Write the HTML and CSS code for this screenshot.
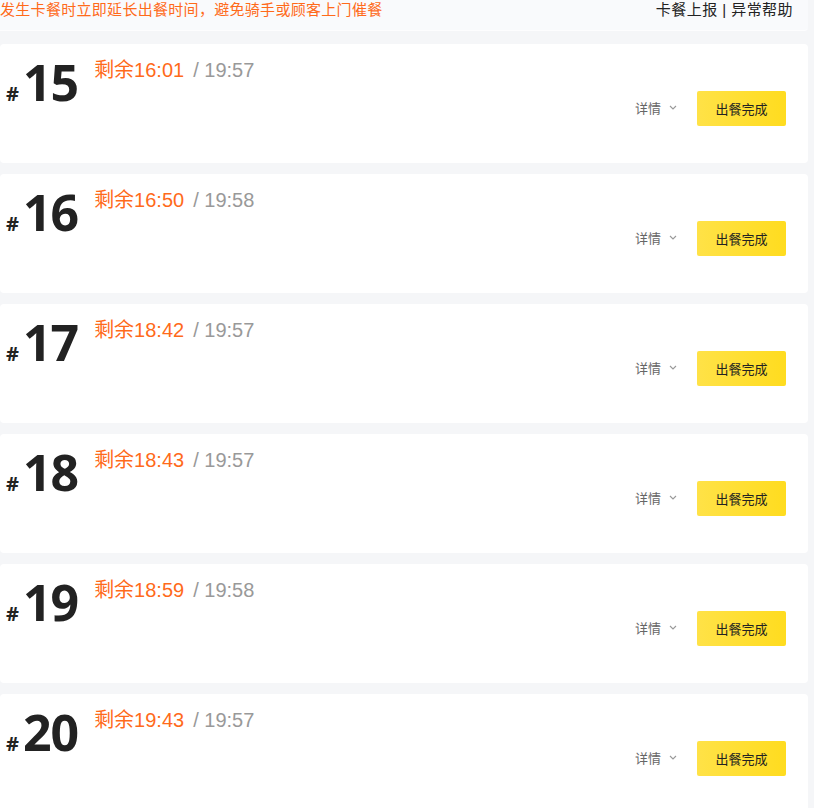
FILE: index.html
```html
<!DOCTYPE html>
<html lang="zh-CN">
<head>
<meta charset="utf-8">
<title>出餐</title>
<link rel="stylesheet" href="styles.css">
</head>
<body>
<div class="page">
  <div class="notice">
    <span class="notice-text">发生卡餐时立即延长出餐时间，避免骑手或顾客上门催餐</span>
    <span class="notice-links"><a class="link">卡餐上报</a> | <a class="link">异常帮助</a></span>
  </div>
  <div class="list">
    <div class="card">
      <div class="info">
        <div class="num"><span class="hash">#</span><span class="digits">15</span></div>
        <div class="time"><span class="remain">剩余16:01</span><span class="due">/ 19:57</span></div>
      </div>
      <div class="actions">
        <span class="detail">详情<svg class="chev" width="8" height="5" viewBox="0 0 8 5"><path d="M1 1l3 3 3-3" fill="none" stroke="#999" stroke-width="1.1"/></svg></span>
        <button class="done">出餐完成</button>
      </div>
    </div>
    <div class="card">
      <div class="info">
        <div class="num"><span class="hash">#</span><span class="digits">16</span></div>
        <div class="time"><span class="remain">剩余16:50</span><span class="due">/ 19:58</span></div>
      </div>
      <div class="actions">
        <span class="detail">详情<svg class="chev" width="8" height="5" viewBox="0 0 8 5"><path d="M1 1l3 3 3-3" fill="none" stroke="#999" stroke-width="1.1"/></svg></span>
        <button class="done">出餐完成</button>
      </div>
    </div>
    <div class="card">
      <div class="info">
        <div class="num"><span class="hash">#</span><span class="digits">17</span></div>
        <div class="time"><span class="remain">剩余18:42</span><span class="due">/ 19:57</span></div>
      </div>
      <div class="actions">
        <span class="detail">详情<svg class="chev" width="8" height="5" viewBox="0 0 8 5"><path d="M1 1l3 3 3-3" fill="none" stroke="#999" stroke-width="1.1"/></svg></span>
        <button class="done">出餐完成</button>
      </div>
    </div>
    <div class="card">
      <div class="info">
        <div class="num"><span class="hash">#</span><span class="digits">18</span></div>
        <div class="time"><span class="remain">剩余18:43</span><span class="due">/ 19:57</span></div>
      </div>
      <div class="actions">
        <span class="detail">详情<svg class="chev" width="8" height="5" viewBox="0 0 8 5"><path d="M1 1l3 3 3-3" fill="none" stroke="#999" stroke-width="1.1"/></svg></span>
        <button class="done">出餐完成</button>
      </div>
    </div>
    <div class="card">
      <div class="info">
        <div class="num"><span class="hash">#</span><span class="digits">19</span></div>
        <div class="time"><span class="remain">剩余18:59</span><span class="due">/ 19:58</span></div>
      </div>
      <div class="actions">
        <span class="detail">详情<svg class="chev" width="8" height="5" viewBox="0 0 8 5"><path d="M1 1l3 3 3-3" fill="none" stroke="#999" stroke-width="1.1"/></svg></span>
        <button class="done">出餐完成</button>
      </div>
    </div>
    <div class="card">
      <div class="info">
        <div class="num"><span class="hash">#</span><span class="digits">20</span></div>
        <div class="time"><span class="remain">剩余19:43</span><span class="due">/ 19:57</span></div>
      </div>
      <div class="actions">
        <span class="detail">详情<svg class="chev" width="8" height="5" viewBox="0 0 8 5"><path d="M1 1l3 3 3-3" fill="none" stroke="#999" stroke-width="1.1"/></svg></span>
        <button class="done">出餐完成</button>
      </div>
    </div>
  </div>
</div>
</body>
</html>
```

FILE: styles.css
```css
html, body {
  margin: 0;
  padding: 0;
  background: #f5f6f8;
  font-family: "Liberation Sans", "Noto Sans CJK SC", sans-serif;
  overflow: hidden;
}

.page {
  width: 808px;
}

.notice {
  display: flex;
  justify-content: space-between;
  align-items: flex-start;
  height: 31px;
  box-sizing: border-box;
  background: #f9fafc;
  border-bottom: 1px solid #fdfdfe;
  border-bottom-right-radius: 4px;
  padding: 0 15px 0 0;
  font-size: 15px;
  line-height: 20px;
}

.notice-text {
  color: #ff6a1a;
  letter-spacing: 0.3px;
}

.notice-links {
  color: #222;
  letter-spacing: 0.45px;
}

.link {
  color: #222;
  text-decoration: none;
}

.list {
  display: flex;
  flex-direction: column;
  gap: 11px;
  margin-top: 13px;
}

.card {
  height: 119px;
  box-sizing: border-box;
  background: #fff;
  border-radius: 4px;
  display: flex;
  justify-content: space-between;
  align-items: flex-start;
  padding: 13px 22px 0 6px;
}

.info {
  display: flex;
  align-items: flex-start;
}

.num {
  display: flex;
  align-items: baseline;
  color: #222;
  font-family: "Noto Sans", "Liberation Sans", sans-serif;
  font-weight: 700;
  line-height: 50px;
}

.hash {
  font-size: 20px;
  margin-right: 4px;
}

.digits {
  font-size: 50px;
  letter-spacing: -1px;
}

.time {
  margin-left: 16px;
  margin-top: 1px;
  font-size: 20px;
  line-height: 24px;
  white-space: nowrap;
}

.remain {
  color: #ff6a1a;
}

.due {
  color: #999;
  margin-left: 9px;
}

.actions {
  display: flex;
  align-items: center;
  margin-top: 34px;
}

.detail {
  display: flex;
  align-items: center;
  font-size: 13px;
  color: #666;
  margin-right: 20px;
  margin-top: -3px;
}

.chev {
  margin-left: 8px;
  margin-top: 1px;
}

.done {
  width: 89px;
  height: 35px;
  border: none;
  border-radius: 2px;
  background: linear-gradient(90deg, #ffe247 0%, #ffdc1f 100%);
  color: #222;
  font-family: "Liberation Sans", "Noto Sans CJK SC", sans-serif;
  font-size: 13px;
  padding: 0;
}
```
